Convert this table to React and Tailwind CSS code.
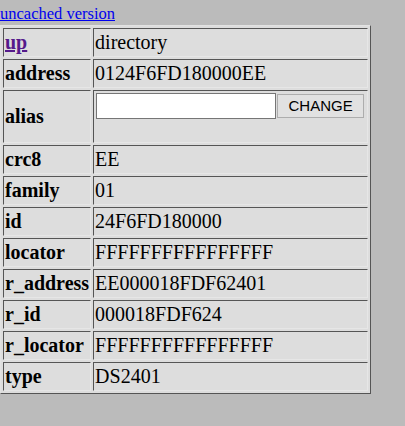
export default function App() {
  const rows = [
    ["address", "0124F6FD180000EE"],
    ["alias", null],
    ["crc8", "EE"],
    ["family", "01"],
    ["id", "24F6FD180000"],
    ["locator", "FFFFFFFFFFFFFFFF"],
    ["r_address", "EE000018FDF62401"],
    ["r_id", "000018FDF624"],
    ["r_locator", "FFFFFFFFFFFFFFFF"],
    ["type", "DS2401"],
  ];

  const cell =
    "border border-t-[#555] border-l-[#555] border-r-[#e6e6e6] border-b-[#e6e6e6] px-[1px] py-[2px] leading-[23px] align-middle";

  return (
    <div className="min-h-screen w-[405px] h-[426px] bg-[#bbbbbb] font-['Liberation_Serif',serif] text-black">
      <div className="h-[25px] pt-[5px] text-[16.5px] leading-[18px]">
        <a href="#" className="text-[#0000ee] underline">
          uncached version
        </a>
      </div>
      <table className="w-[371px] border-separate border-spacing-[2px] bg-[#dddddd] border border-t-[#e2e2e2] border-l-[#e2e2e2] border-r-[#555] border-b-[#555] text-[20px]">
        <tbody>
          <tr>
            <td className={`${cell} w-[88px] font-bold`}>
              <a href="#" className="text-[#551a8b] underline">
                up
              </a>
            </td>
            <td className={cell}>directory</td>
          </tr>
          {rows.map(([k, v]) => (
            <tr key={k}>
              <td className={`${cell} font-bold whitespace-nowrap`}>{k}</td>
              {v !== null ? (
                <td className={cell}>{v}</td>
              ) : (
                <td className={cell}>
                  <div className="h-[47px] flex items-start pl-[1px]">
                    <input
                      type="text"
                      className="w-[180px] h-[26px] bg-white border border-[#767676] outline-none"
                    />
                    <button className="ml-[1px] mt-[1px] w-[87px] h-[24px] bg-[#e1e1e1] border border-[#adadad] font-['Liberation_Sans',Arial,sans-serif] text-[15px] leading-[22px] text-black">
                      CHANGE
                    </button>
                  </div>
                </td>
              )}
            </tr>
          ))}
        </tbody>
      </table>
    </div>
  );
}
